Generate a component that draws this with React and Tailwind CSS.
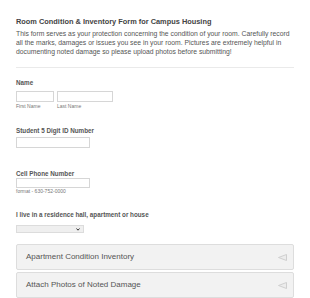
export default function App() {
  const font = { fontFamily: '"Liberation Sans", Arial, sans-serif' };
  return (
    <div className="w-[310px] h-[298px] bg-white overflow-hidden" style={font}>
      <div className="pt-[17px] px-[16px] flex flex-col">
        <div className="text-[7.4px] leading-[9px] font-bold text-[#444]">
          Room Condition &amp; Inventory Form for Campus Housing
        </div>
        <p className="mt-[3px] text-[6.8px] leading-[9px] text-[#555]">
          This form serves as your protection concerning the condition of your room. Carefully record all the marks, damages or issues you see in your room. Pictures are extremely helpful in documenting noted damage so please upload photos before submitting!
        </p>
        <div className="mt-[11px] border-t border-[#eaeaea]" />

        <div className="mt-[11px] text-[6.3px] leading-[8px] font-bold text-[#555]">Name</div>
        <div className="mt-[4px] flex gap-[3px]">
          <div className="flex flex-col">
            <div className="w-[38px] h-[11px] border border-[#d6d6d6] bg-white" />
            <div className="mt-[1px] text-[5px] leading-[6px] text-[#777]">First Name</div>
          </div>
          <div className="flex flex-col">
            <div className="w-[56px] h-[11px] border border-[#d6d6d6] bg-white" />
            <div className="mt-[1px] text-[5px] leading-[6px] text-[#777]">Last Name</div>
          </div>
        </div>

        <div className="mt-[18px] text-[6.3px] leading-[8px] font-bold text-[#555]">Student 5 Digit ID Number</div>
        <div className="mt-[2px] w-[74px] h-[11px] border border-[#d6d6d6] bg-white" />

        <div className="mt-[22px] text-[6.3px] leading-[8px] font-bold text-[#555]">Cell Phone Number</div>
        <div className="mt-0 w-[74px] h-[10px] border border-[#d6d6d6] bg-white" />
        <div className="text-[5px] leading-[7px] text-[#777]">format - 630-752-0000</div>

        <div className="mt-[16px] text-[6.3px] leading-[8px] font-bold text-[#555]">I live in a residence hall, apartment or house</div>
        <div className="mt-[6px] w-[68px] h-[8px] border border-[#dcdcdc] bg-[#efefef] flex items-center justify-end pr-[3px]">
          <svg width="4" height="3" viewBox="0 0 4 3">
            <polyline points="0.5,0.5 2,2.2 3.5,0.5" fill="none" stroke="#333" strokeWidth="1" />
          </svg>
        </div>

        <div className="mt-[11px] flex flex-col gap-[2px]">
          {["Apartment Condition Inventory", "Attach Photos of Noted Damage"].map((t) => (
            <div key={t} className="h-[26px] border border-[#dddddd] rounded-[2px] bg-[#f2f2f2] flex items-center justify-between pl-[9px] pr-[6px]">
              <span className="text-[8px] leading-[10px] text-[#555]">{t}</span>
              <svg width="9" height="7" viewBox="0 0 9 7">
                <polygon points="8.5,0.5 0.5,3.5 8.5,6.5" fill="#ececec" stroke="#cfcfcf" strokeWidth="1" />
              </svg>
            </div>
          ))}
        </div>
      </div>
    </div>
  );
}
